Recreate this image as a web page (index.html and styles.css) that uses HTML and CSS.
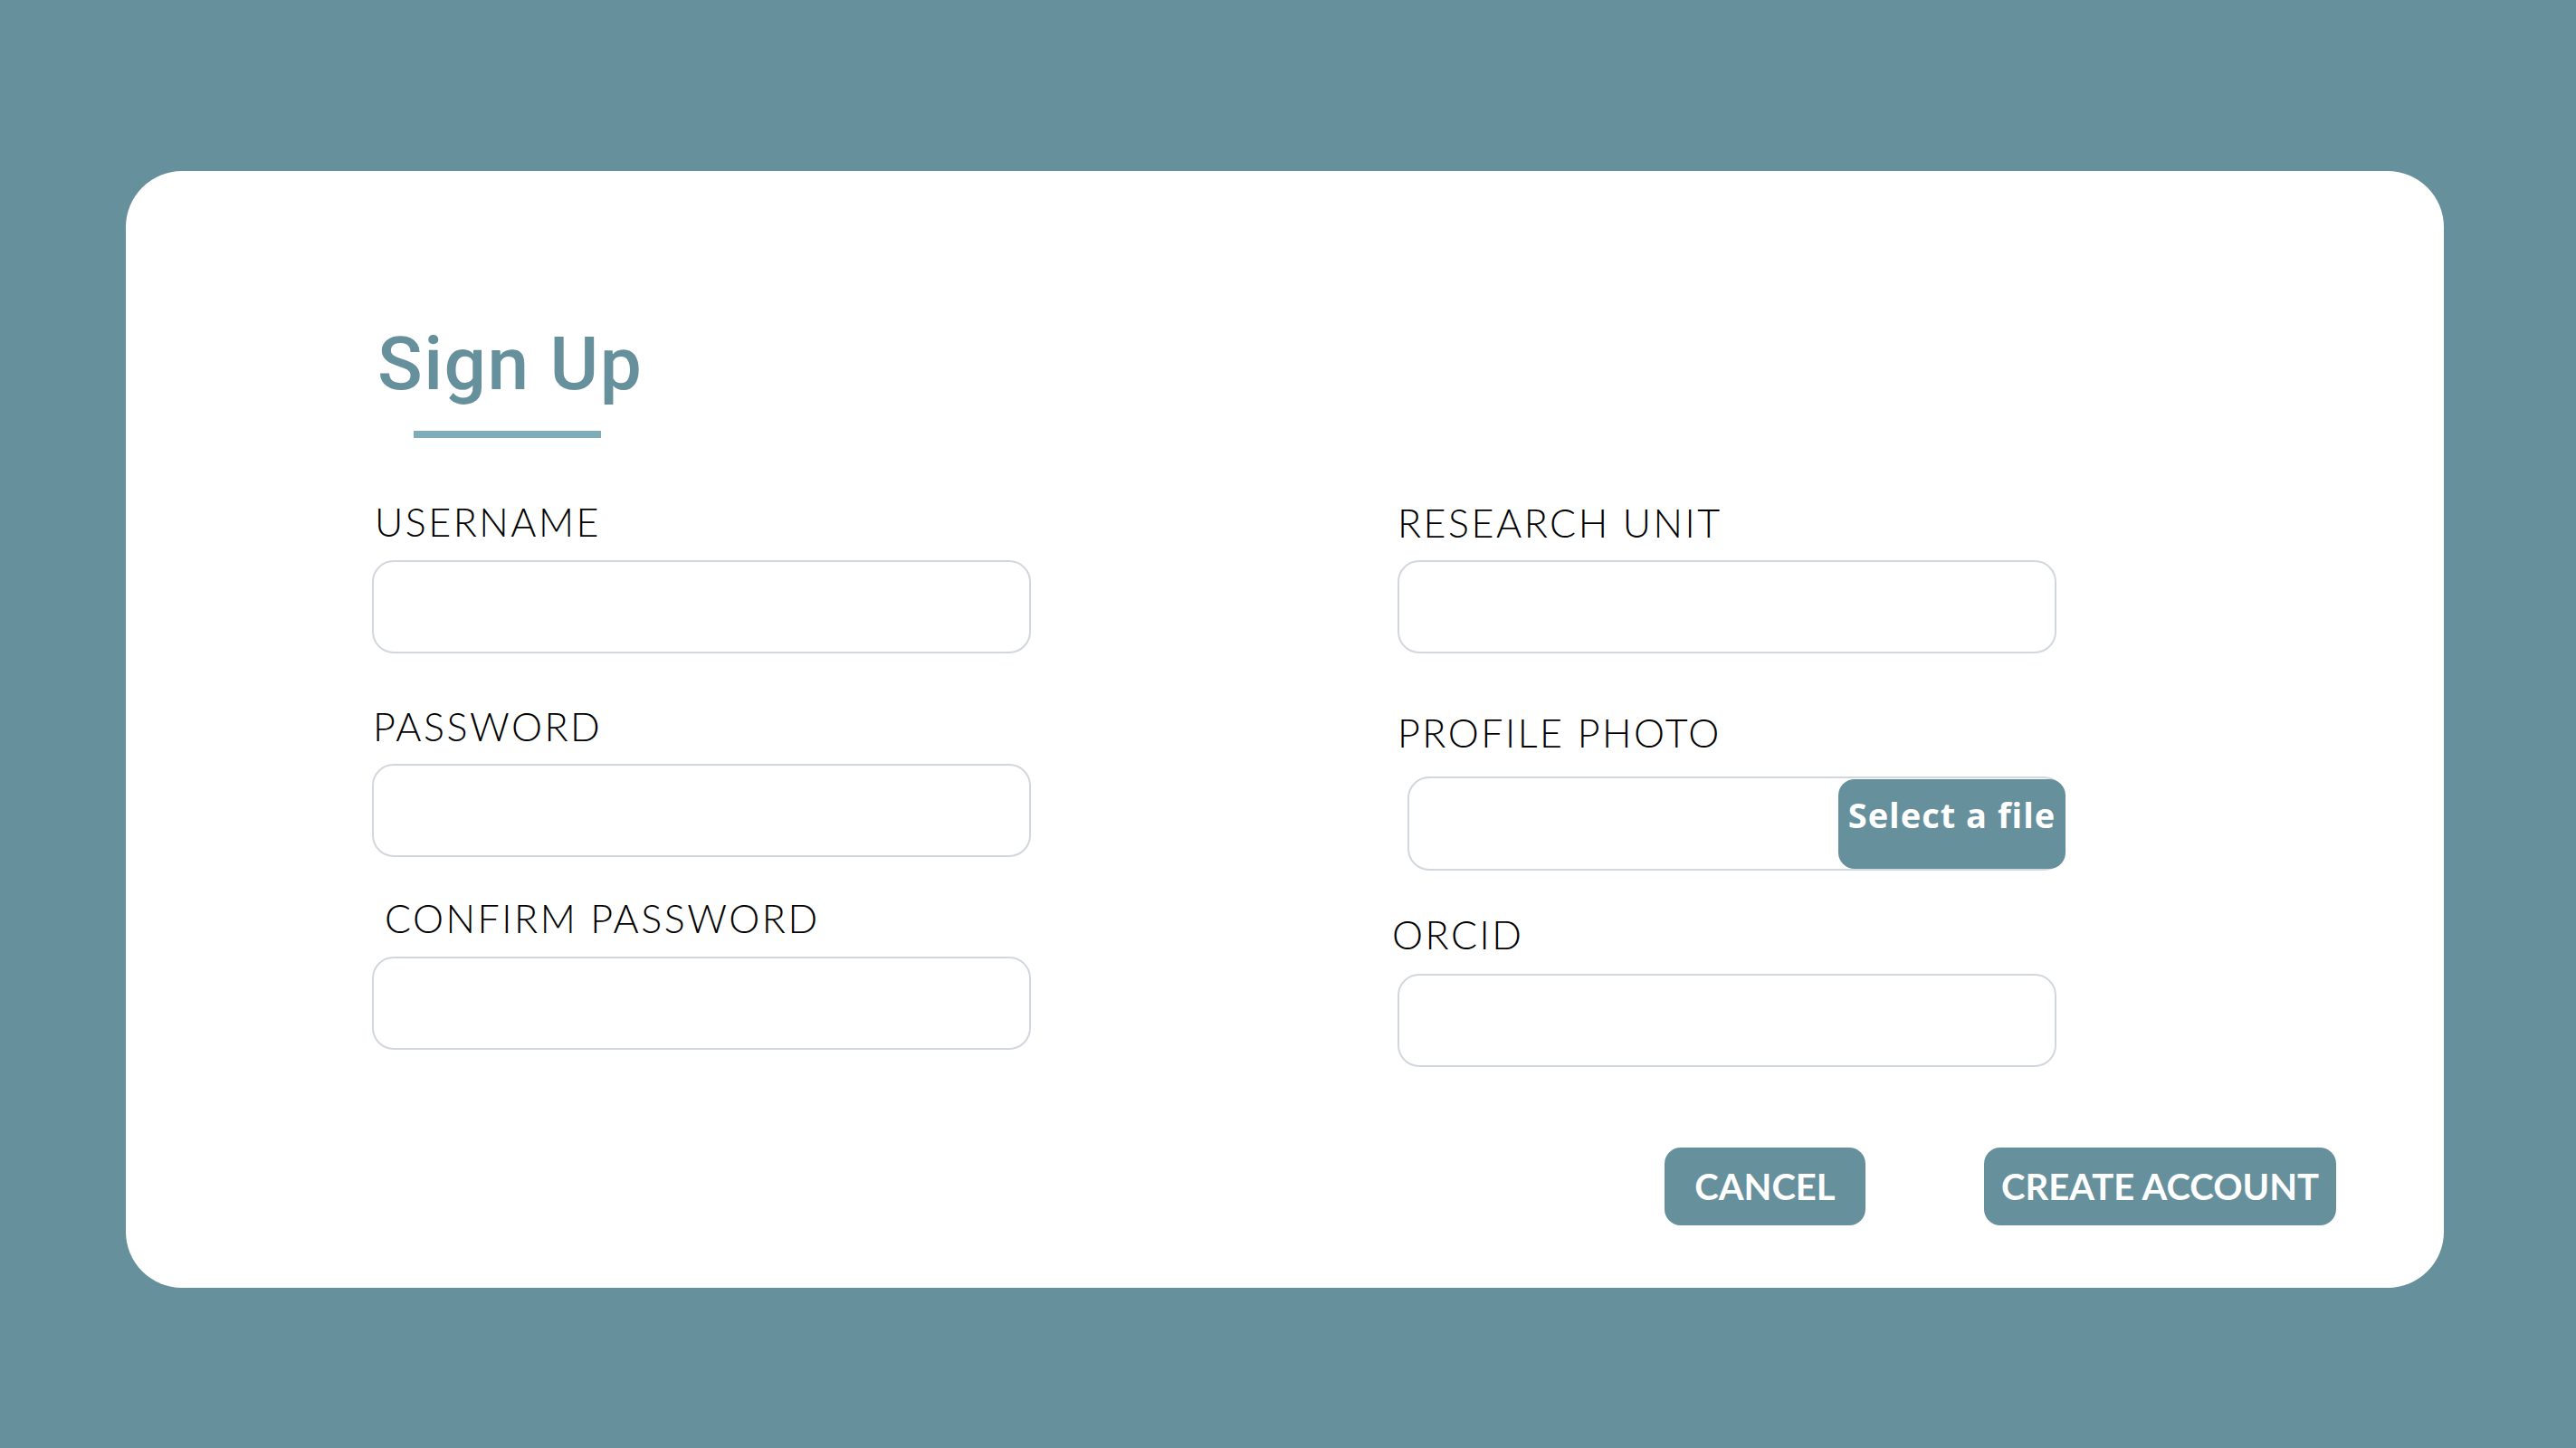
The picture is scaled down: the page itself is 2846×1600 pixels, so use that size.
FILE: index.html
```html
<!DOCTYPE html>
<html lang="en">
<head>
<meta charset="utf-8">
<title>Sign Up</title>
<link rel="stylesheet" href="styles.css">
</head>
<body>
<main class="card">
  <header class="head">
    <h1 class="title">Sign Up</h1>
    <div class="rule"></div>
  </header>
  <form class="form">
    <div class="col">
      <label class="label label-user">USERNAME</label>
      <div class="input"></div>
      <label class="label label-pw">PASSWORD</label>
      <div class="input"></div>
      <label class="label label-confirm">CONFIRM PASSWORD</label>
      <div class="input"></div>
    </div>
    <div class="col">
      <label class="label label-unit">RESEARCH UNIT</label>
      <div class="input"></div>
      <label class="label label-photo">PROFILE PHOTO</label>
      <div class="file">
        <span class="file-btn">Select a file</span>
      </div>
      <label class="label label-orcid">ORCID</label>
      <div class="input"></div>
    </div>
  </form>
  <div class="actions">
    <button class="btn btn-cancel" type="button">CANCEL</button>
    <button class="btn btn-create" type="button">CREATE ACCOUNT</button>
  </div>
</main>
</body>
</html>
```
FILE: styles.css
```css
* { box-sizing: border-box; }

html, body {
  margin: 0;
  padding: 0;
}

body {
  width: 2846px;
  height: 1600px;
  background: #67909d;
  font-family: "Lato", "Liberation Sans", sans-serif;
  overflow: hidden;
  padding-top: 189px;
  padding-left: 139px;
}

.card {
  width: 2561px;
  height: 1234px;
  background: #ffffff;
  border-radius: 62px;
  padding: 165px 119px 0 272px;
  display: flex;
  flex-direction: column;
}

.head {
  display: flex;
  flex-direction: column;
  align-items: flex-start;
}

.title {
  margin: 0 0 0 6px;
  font-family: "Roboto", "Liberation Sans", sans-serif;
  font-weight: 500;
  font-size: 82px;
  line-height: 96px;
  letter-spacing: 1.5px;
  color: #67909d;
}

.rule {
  width: 207px;
  height: 8px;
  background: #7eacb9;
  margin: 26px 0 0 46px;
}

.form {
  display: grid;
  grid-template-columns: 728px 728px;
  column-gap: 405px;
  margin-top: 66px;
}

.col {
  display: flex;
  flex-direction: column;
}

.label {
  display: block;
  font-weight: 300;
  font-size: 43px;
  line-height: 52px;
  letter-spacing: 2.5px;
  color: #000000;
  white-space: nowrap;
  padding-top: 1px;
  margin-bottom: 16px;
}

.input {
  height: 103px;
  border: 2px solid #d2d7de;
  border-radius: 24px;
  background: #fff;
}

.label-user { padding-left: 3px; }
.label-pw { padding-left: 1px; margin-top: 54px; margin-bottom: 15px; }
.label-confirm { padding-left: 14px; margin-top: 41px; }

.label-unit { margin-top: 1px; margin-bottom: 15px; }
.label-photo { margin-top: 61px; margin-bottom: 22px; }
.label-orcid { margin-left: -6px; margin-top: 44px; margin-bottom: 17px; }

.file {
  height: 104px;
  margin-left: 11px;
  width: 727px;
  border: 2px solid #d2d7de;
  border-radius: 24px;
  display: flex;
  justify-content: flex-end;
  align-items: stretch;
}

.file-btn {
  width: 251px;
  margin: 1px -2px 0 0;
  background: #67909d;
  border-radius: 18px;
  display: flex;
  justify-content: center;
  align-items: flex-start;
  padding-top: 16px;
  color: #ffffff;
  font-family: "Open Sans", "Liberation Sans", sans-serif;
  font-weight: 700;
  font-size: 38px;
  line-height: 46px;
  letter-spacing: 1px;
  white-space: nowrap;
}

.actions {
  display: flex;
  justify-content: flex-end;
  gap: 131px;
  margin-top: auto;
  margin-bottom: 69px;
}

.btn {
  height: 86px;
  border: 0;
  border-radius: 18px;
  background: #67909d;
  color: #ffffff;
  font-family: "Lato", "Liberation Sans", sans-serif;
  font-weight: 700;
  font-size: 40px;
  line-height: 46px;
  padding: 0;
  display: flex;
  align-items: center;
  justify-content: center;
  white-space: nowrap;
}

.btn-cancel { width: 222px; }
.btn-create { width: 389px; }
```
